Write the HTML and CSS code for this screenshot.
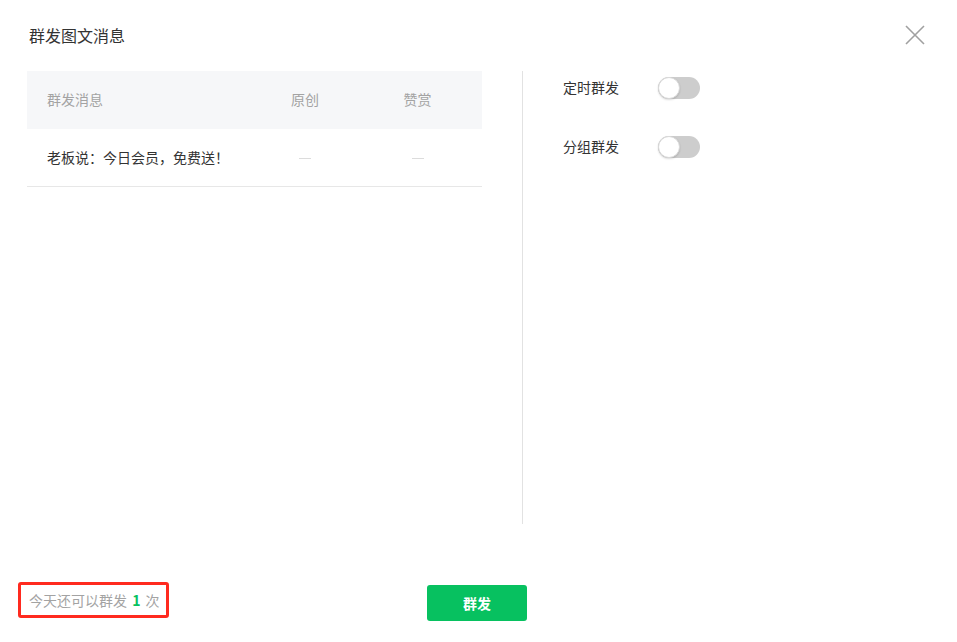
FILE: index.html
```html
<!DOCTYPE html>
<html lang="zh-CN">
<head>
    <meta charset="UTF-8">
    <meta name="viewport" content="width=device-width, initial-scale=1.0">
    <title>群发图文消息</title>
    <link rel="stylesheet" href="styles.css">
</head>
<body>

<div class="dialog">
    <div class="dialog-header">
        <h1 class="dialog-title">群发图文消息</h1>
        <button class="close">
            <svg width="20" height="20" viewBox="0 0 20 20">
                <path d="M1 1 L19 19 M19 1 L1 19" stroke="#a0a0a0" stroke-width="1.6" fill="none"/>
            </svg>
        </button>
    </div>

    <div class="dialog-body">
        <div class="msg-table">
            <div class="table-row table-head">
                <div class="cell cell-name">群发消息</div>
                <div class="cell cell-mid">原创</div>
                <div class="cell cell-mid">赞赏</div>
            </div>
            <div class="table-row table-item">
                <div class="cell cell-name">老板说：今日会员，免费送！</div>
                <div class="cell cell-mid"><span class="dash"></span></div>
                <div class="cell cell-mid"><span class="dash"></span></div>
            </div>
        </div>

        <div class="divider"></div>

        <div class="options">
            <div class="option">
                <span class="option-label">定时群发</span>
                <span class="switch"><span class="knob"></span></span>
            </div>
            <div class="option">
                <span class="option-label">分组群发</span>
                <span class="switch"><span class="knob"></span></span>
            </div>
        </div>
    </div>

    <div class="dialog-footer">
        <div class="quota">今天还可以群发 <b class="num">1</b> 次</div>
        <button class="btn-send">群发</button>
        <div></div>
    </div>
</div>

</body>
</html>
```

FILE: styles.css
```css
* {
    padding: 0;
    margin: 0;
    box-sizing: border-box;
}
body {
    background: #fff;
    font-family: "Noto Sans CJK SC", "Noto Sans", sans-serif;
    color: #333;
}
.dialog {
    width: 957px;
    height: 642px;
}
.dialog-header {
    display: flex;
    align-items: center;
    justify-content: space-between;
    height: 71px;
    padding: 0 32px 2px 29px;
}
.dialog-title {
    font-size: 16px;
    font-weight: normal;
    color: #333;
    line-height: 22px;
}
.close {
    width: 20px;
    height: 20px;
    border: none;
    background: none;
    cursor: pointer;
    display: block;
}
.close svg {
    display: block;
}
.dialog-body {
    display: flex;
    padding-left: 27px;
    height: 453px;
}
.msg-table {
    width: 455px;
}
.table-row {
    display: grid;
    grid-template-columns: 222px 112px 113px;
    height: 58px;
    align-items: center;
    font-size: 14px;
    padding-bottom: 2px;
}
.table-head {
    background: #f6f7f9;
    color: #a3a3a3;
}
.table-item {
    border-bottom: 1px solid #e7e7e7;
    color: #333;
}
.cell-name {
    padding-left: 20px;
}
.cell-mid {
    text-align: center;
}
.dash {
    display: inline-block;
    vertical-align: middle;
    width: 12px;
    height: 1px;
    background: #dcdcdc;
}
.divider {
    width: 1px;
    background: #e2e2e2;
    margin-left: 40px;
}
.options {
    padding-left: 40px;
    padding-top: 6px;
}
.option {
    display: flex;
    align-items: center;
    height: 22px;
    margin-bottom: 37px;
}
.option-label {
    width: 95px;
    font-size: 14px;
    line-height: 20px;
    margin-bottom: 2px;
    color: #333;
}
.switch {
    display: block;
    position: relative;
    width: 42px;
    height: 22px;
    border-radius: 11px;
    background: #cdcdcd;
}
.knob {
    position: absolute;
    top: 0;
    left: 0;
    width: 22px;
    height: 22px;
    border-radius: 50%;
    background: #fff;
    border: 1px solid #d9d9d9;
    box-shadow: 0 1px 2px rgba(0, 0, 0, 0.15);
}
.dialog-footer {
    display: grid;
    grid-template-columns: 1fr auto 1fr;
    align-items: start;
    padding: 61px 21px 0 18px;
}
.quota {
    justify-self: start;
    margin-top: -3px;
    width: 151px;
    height: 36px;
    border: 3px solid #ff2a1f;
    border-radius: 3px;
    padding-left: 8px;
    font-size: 14px;
    line-height: 30px;
    color: #a3a3a3;
}
.num {
    color: #07c160;
    font-weight: 600;
    padding: 0 2px;
}
.btn-send {
    width: 100px;
    height: 36px;
    border: none;
    border-radius: 3px;
    background: #07c160;
    color: #fff;
    font-family: inherit;
    font-size: 14px;
    font-weight: bold;
    cursor: pointer;
}
```
